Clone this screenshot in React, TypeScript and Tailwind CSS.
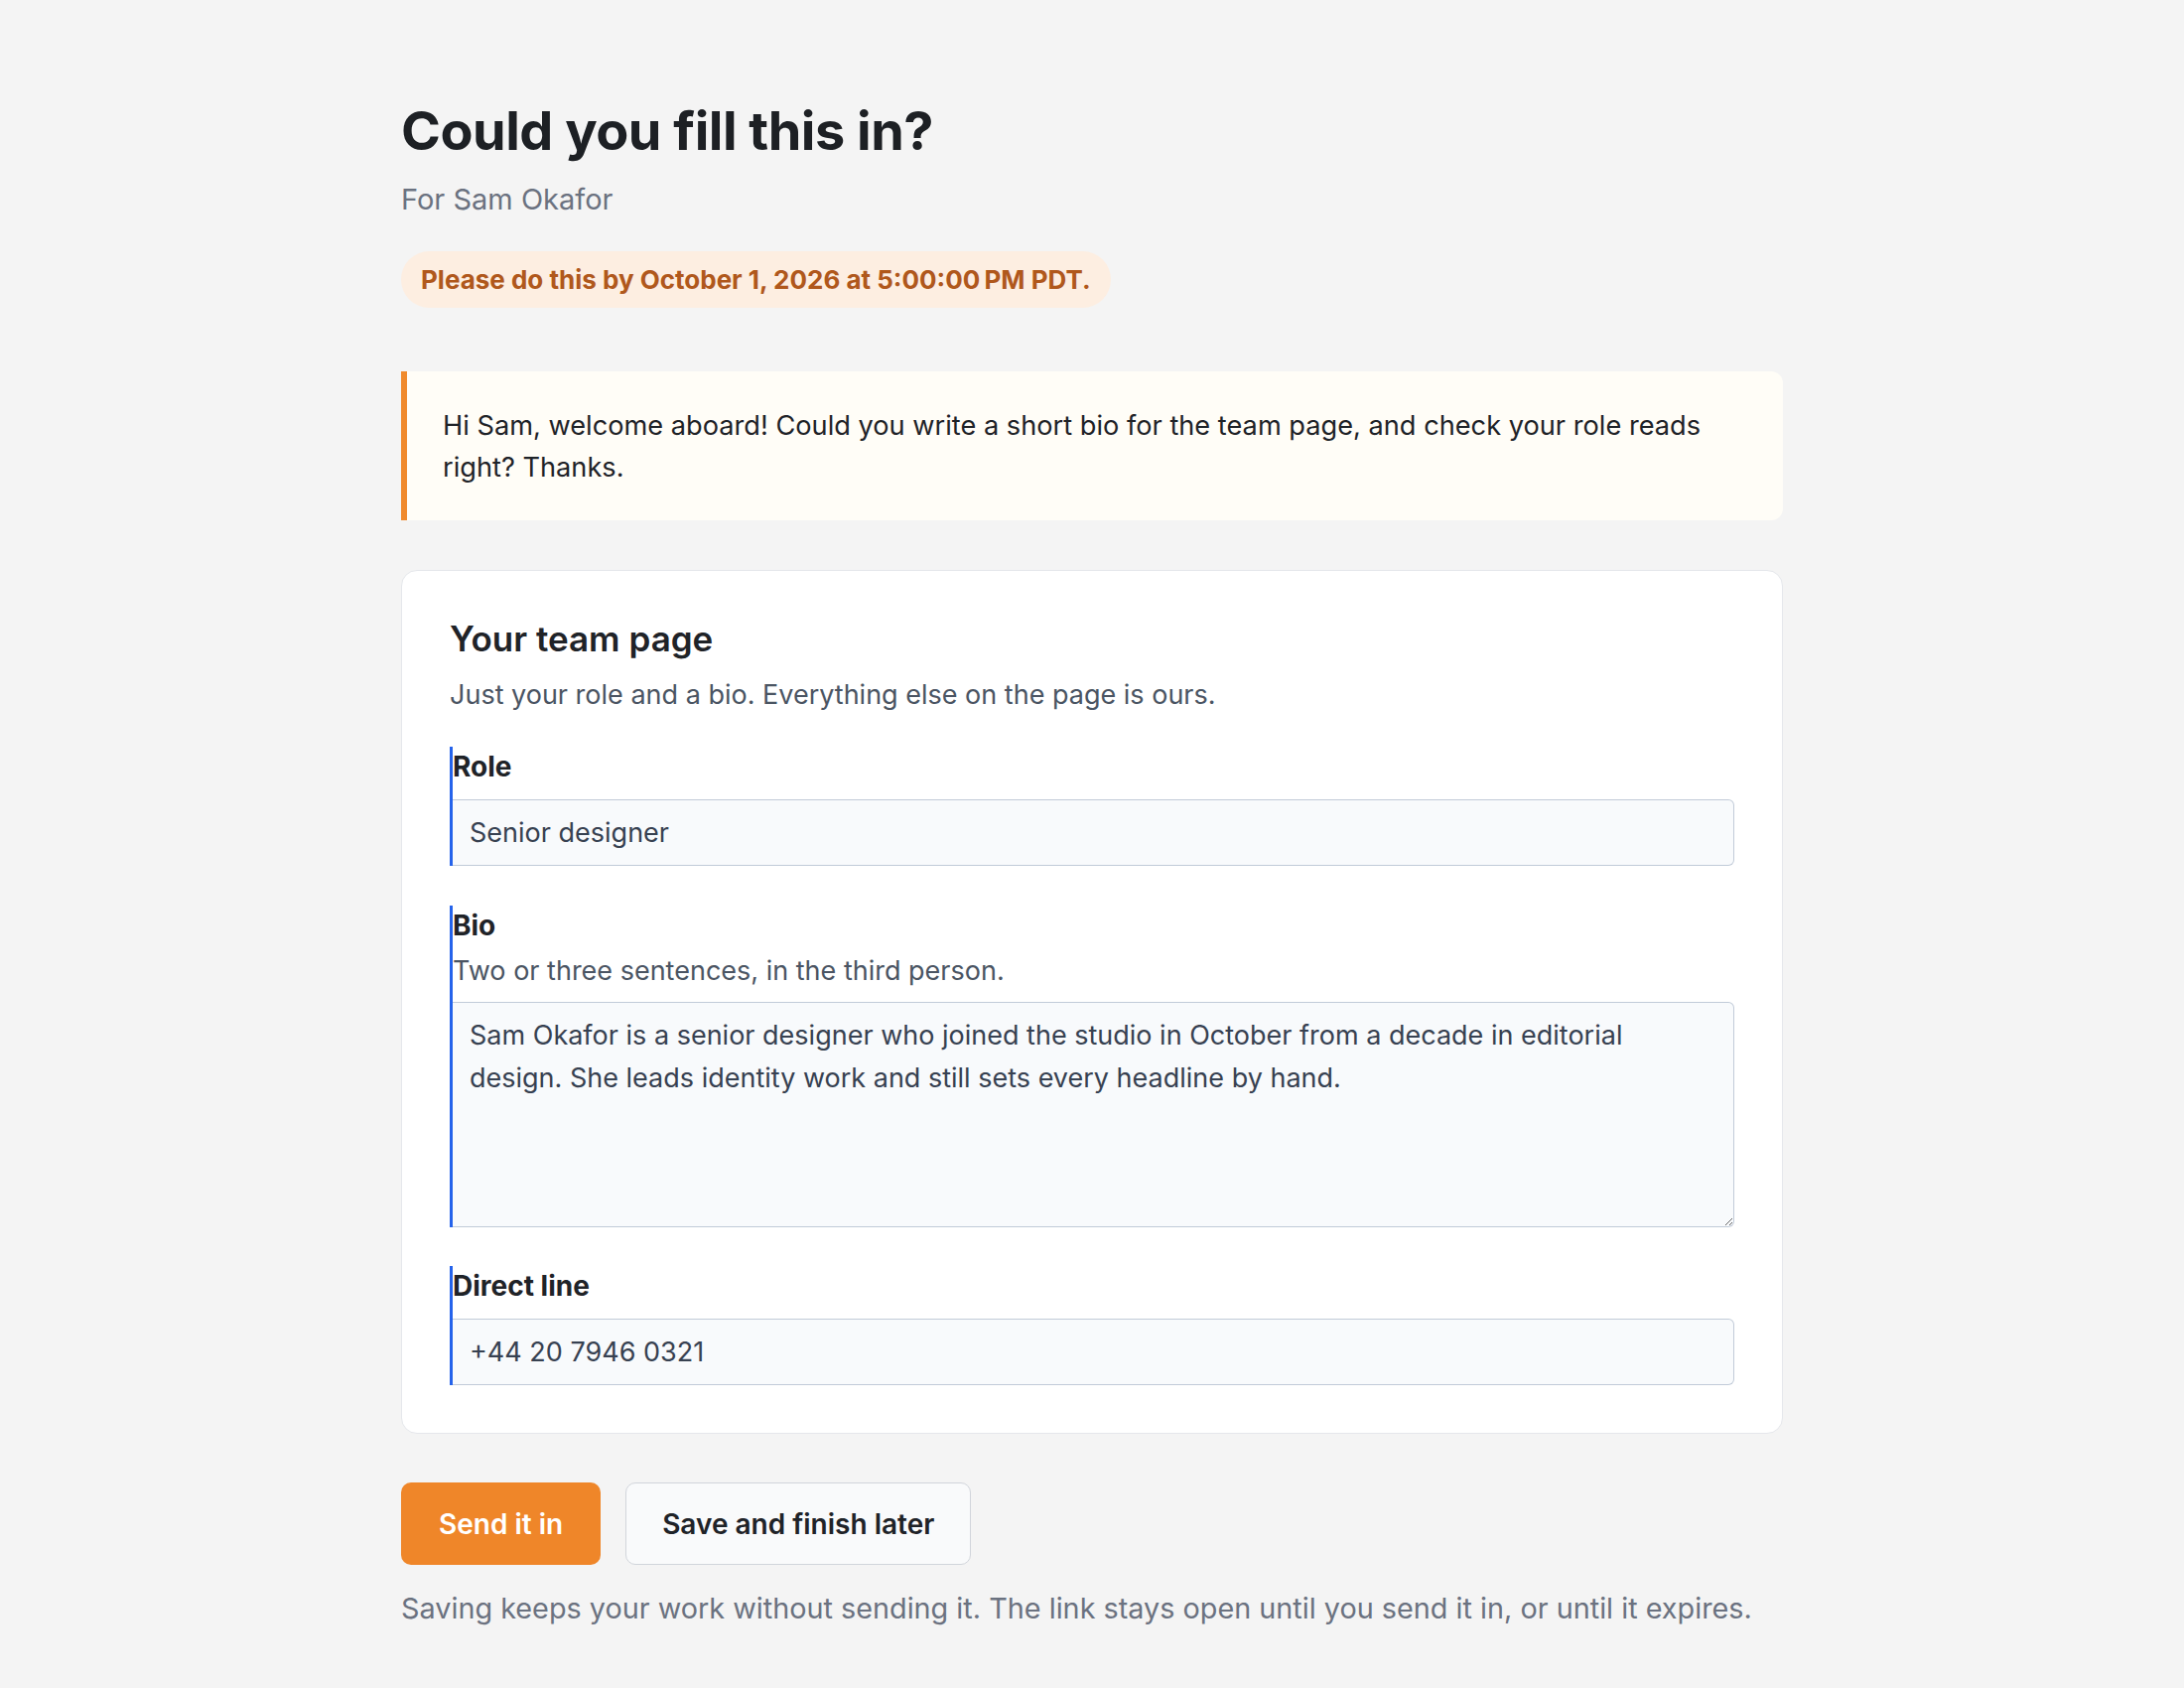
const labelCls = "block text-[28px] leading-[40px] font-bold text-[#1f2328]";
const inputCls =
  "block w-full rounded-r-[6px] border-[1.5px] border-l-0 border-[#c1cbd8] bg-[#f8fafc] px-[17px] py-[11px] text-[27px] leading-[43px] text-[#374151] outline-none";

export default function App() {
  return (
    <div className="min-h-screen bg-[#f4f4f4] font-[Inter,'Liberation_Sans',sans-serif] text-[#1f2328]">
      <main className="mx-auto w-[1392px] pt-[98px] pb-[60px]">
        {/* Header */}
        <h1 className="text-[54px] leading-[68px] font-bold tracking-[-0.5px] text-[#1d2024]">Could you fill this in?</h1>
        <p className="mt-[15px] text-[29px] leading-[40px] text-[#6b7280]">For Sam Okafor</p>
        <div className="mt-[32px] flex">
          <span className="flex h-[57px] items-center rounded-full bg-[#fdeee1] px-[20px] text-[26px] font-bold text-[#b0581c]">
            Please do this by October 1, 2026 at 5:00:00{"\u202F"}PM PDT.
          </span>
        </div>

        {/* Message from sender */}
        <div className="mt-[64px] rounded-r-[12px] border-l-[6px] border-l-[#f08a2c] bg-[#fffdf7] pt-[34px] pb-[32px] pl-[36px] pr-[36px] text-[27.2px] leading-[42px] text-[#1f2328]">
          Hi Sam, welcome aboard! Could you write a short bio for the team page, and check your role reads right? Thanks.
        </div>

        {/* Form card */}
        <section className="mt-[50px] rounded-[16px] border-[1.5px] border-[#e5e7eb] bg-white px-[48px] pt-[47px] pb-[48px]">
          <h2 className="text-[35px] leading-[42px] font-semibold text-[#1f2328]">Your team page</h2>
          <p className="mt-[16px] text-[27px] leading-[40px] text-[#4b5563]">
            Just your role and a bio. Everything else on the page is ours.
          </p>

          <div className="mt-[32px] border-l-[3px] border-l-[#2563eb]">
            <label htmlFor="role" className={labelCls}>Role</label>
            <input id="role" type="text" defaultValue="Senior designer" className={`mt-[13px] ${inputCls}`} />
          </div>

          <div className="mt-[40px] border-l-[3px] border-l-[#2563eb]">
            <label htmlFor="bio" className={labelCls}>Bio</label>
            <p className="mt-[6px] text-[27px] leading-[40px] text-[#4b5563]">Two or three sentences, in the third person.</p>
            <textarea
              id="bio"
              defaultValue={"Sam Okafor is a senior designer who joined the studio in October from a decade in editorial\ndesign. She leads identity work and still sets every headline by hand."}
              className={`mt-[11px] h-[227px] resize-y ${inputCls}`}
            />
          </div>

          <div className="mt-[39px] border-l-[3px] border-l-[#2563eb]">
            <label htmlFor="phone" className={labelCls}>Direct line</label>
            <input id="phone" type="tel" defaultValue="+44 20 7946 0321" className={`mt-[13px] ${inputCls}`} />
          </div>
        </section>

        {/* Actions */}
        <div className="mt-[49px] flex gap-[25px]">
          <button className="h-[83px] rounded-[10px] bg-[#ef8629] px-[38px] text-[28px] font-semibold text-white">
            Send it in
          </button>
          <button className="h-[83px] rounded-[10px] border-[1.5px] border-[#d1d5db] bg-[#f9fafb] px-[36px] text-[28px] font-semibold text-[#1f2328]">
            Save and finish later
          </button>
        </div>
        <p className="mt-[24px] text-[28.8px] leading-[40px] text-[#6b7280]">
          Saving keeps your work without sending it. The link stays open until you send it in, or until it expires.
        </p>
      </main>
    </div>
  );
}
